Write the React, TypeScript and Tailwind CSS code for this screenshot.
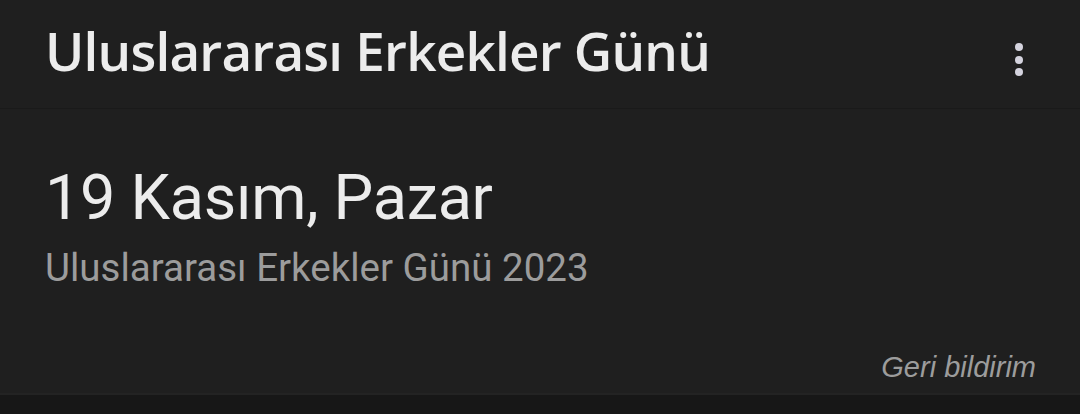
import React from 'react'

export default function App() {
  return (
    <div className="w-[1080px] h-[414px] bg-[#1f1f1f] flex flex-col overflow-hidden">
      {/* Header */}
      <div className="h-[109px] flex items-start justify-between pl-[45px] pr-[57px] border-b border-[#1a1a1a]">
        <h1
          className="text-[53px] leading-none mt-[24px] text-[#ececec] tracking-[-0.8px]"
          style={{ fontFamily: '"Open Sans", Roboto, sans-serif', fontWeight: 600 }}
        >
          Uluslararası Erkekler Günü
        </h1>
        <button className="mt-[43px] flex flex-col items-center gap-[4.5px]" aria-label="Diğer seçenekler">
          <span className="w-2 h-2 rounded-full bg-[#d4d3de]" />
          <span className="w-2 h-2 rounded-full bg-[#d4d3de]" />
          <span className="w-2 h-2 rounded-full bg-[#d4d3de]" />
        </button>
      </div>

      {/* Body */}
      <div className="flex-1 flex flex-col pl-[45px] pr-[44px]">
        <div
          className="text-[63px] leading-none mt-[57px] text-[#ececec] tracking-[-0.3px]"
          style={{ fontFamily: 'Roboto, sans-serif' }}
        >
          19 Kasım, Pazar
        </div>
        <div
          className="text-[38.5px] leading-none mt-[20px] text-[#9c9c9c]"
          style={{ fontFamily: 'Roboto, sans-serif' }}
        >
          Uluslararası Erkekler Günü 2023
        </div>
        <div className="flex-1" />
        <div
          className="self-end italic text-[29px] leading-none mb-[11px] text-[#9c9c9c]"
          style={{ fontFamily: '"Liberation Sans", Arial, sans-serif' }}
        >
          Geri bildirim
        </div>
      </div>

      <div className="h-[21px] bg-[#171717] border-t-2 border-[#232323]" />
    </div>
  )
}
